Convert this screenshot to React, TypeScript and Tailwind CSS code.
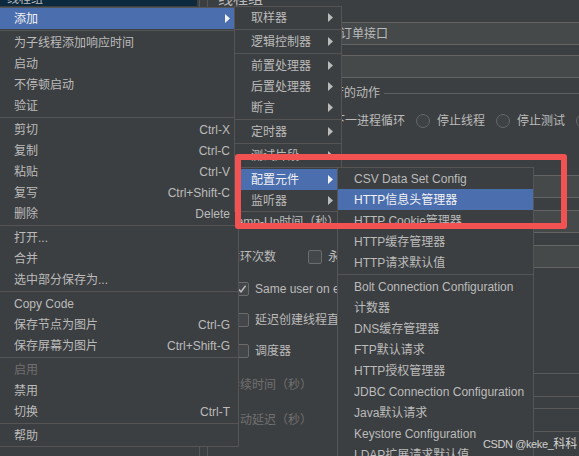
import React from "react";

type Item =
  | { type: "sep" }
  | {
      type: "item";
      label: string;
      shortcut?: string;
      arrow?: boolean;
      active?: boolean;
      disabled?: boolean;
    };

const Arrow = ({ color }: { color: string }) => (
  <svg width="5" height="9" viewBox="0 0 5 9" className="shrink-0">
    <path d="M0 0L5 4.5L0 9Z" fill={color} />
  </svg>
);

const Sep = () => (
  <div className="h-[3px] pt-[1px]">
    <div className="h-px bg-[#555555]" />
  </div>
);

function MenuList({ items, rowClass }: { items: Item[]; rowClass: string }) {
  return (
    <>
      {items.map((it, i) =>
        it.type === "sep" ? (
          <Sep key={i} />
        ) : (
          <div
            key={i}
            className={`flex h-[21px] items-center justify-between whitespace-nowrap ${rowClass} ${
              it.active ? "bg-[#4b6eaf] text-[#f2f2f2]" : it.disabled ? "text-[#707070]" : "text-[#bbbbbb]"
            }`}
          >
            <span className="leading-[14px]">{it.label}</span>
            {it.shortcut ? <span className="leading-[14px]">{it.shortcut}</span> : null}
            {it.arrow ? <Arrow color={it.active ? "#f2f2f2" : "#bbbbbb"} /> : null}
          </div>
        )
      )}
    </>
  );
}

const mainItems: Item[] = [
  { type: "item", label: "添加", arrow: true, active: true },
  { type: "sep" },
  { type: "item", label: "为子线程添加响应时间" },
  { type: "item", label: "启动" },
  { type: "item", label: "不停顿启动" },
  { type: "item", label: "验证" },
  { type: "sep" },
  { type: "item", label: "剪切", shortcut: "Ctrl-X" },
  { type: "item", label: "复制", shortcut: "Ctrl-C" },
  { type: "item", label: "粘贴", shortcut: "Ctrl-V" },
  { type: "item", label: "复写", shortcut: "Ctrl+Shift-C" },
  { type: "item", label: "删除", shortcut: "Delete" },
  { type: "sep" },
  { type: "item", label: "打开..." },
  { type: "item", label: "合并" },
  { type: "item", label: "选中部分保存为..." },
  { type: "sep" },
  { type: "item", label: "Copy Code" },
  { type: "item", label: "保存节点为图片", shortcut: "Ctrl-G" },
  { type: "item", label: "保存屏幕为图片", shortcut: "Ctrl+Shift-G" },
  { type: "sep" },
  { type: "item", label: "启用", disabled: true },
  { type: "item", label: "禁用" },
  { type: "item", label: "切换", shortcut: "Ctrl-T" },
  { type: "sep" },
  { type: "item", label: "帮助" },
];

const addItems: Item[] = [
  { type: "item", label: "取样器", arrow: true },
  { type: "sep" },
  { type: "item", label: "逻辑控制器", arrow: true },
  { type: "sep" },
  { type: "item", label: "前置处理器", arrow: true },
  { type: "item", label: "后置处理器", arrow: true },
  { type: "item", label: "断言", arrow: true },
  { type: "sep" },
  { type: "item", label: "定时器", arrow: true },
  { type: "sep" },
  { type: "item", label: "测试片段", arrow: true },
  { type: "sep" },
  { type: "item", label: "配置元件", arrow: true, active: true },
  { type: "item", label: "监听器", arrow: true },
];

const configItems: Item[] = [
  { type: "item", label: "CSV Data Set Config" },
  { type: "item", label: "HTTP信息头管理器", active: true },
  { type: "item", label: "HTTP Cookie管理器" },
  { type: "item", label: "HTTP缓存管理器" },
  { type: "item", label: "HTTP请求默认值" },
  { type: "sep" },
  { type: "item", label: "Bolt Connection Configuration" },
  { type: "item", label: "计数器" },
  { type: "item", label: "DNS缓存管理器" },
  { type: "item", label: "FTP默认请求" },
  { type: "item", label: "HTTP授权管理器" },
  { type: "item", label: "JDBC Connection Configuration" },
  { type: "item", label: "Java默认请求" },
  { type: "item", label: "Keystore Configuration" },
  { type: "item", label: "LDAP扩展请求默认值" },
  { type: "item", label: "LDAP请求默认值" },
];

const Radio = () => (
  <div className="h-[14px] w-[14px] shrink-0 rounded-full border border-[#666666] bg-[#3f4244]" />
);

const Checkbox = ({ checked }: { checked?: boolean }) => (
  <div className="flex h-[14px] w-[14px] shrink-0 items-center justify-center rounded-[2px] border border-[#6b6b6b] bg-[#43474a]">
    {checked ? (
      <svg width="10" height="10" viewBox="0 0 10 10">
        <path d="M1.5 5.2L4 7.8L8.6 1.8" stroke="#bbbbbb" strokeWidth="1.5" fill="none" />
      </svg>
    ) : null}
  </div>
);

export default function App() {
  return (
    <div className="relative flex h-[456px] w-[579px] overflow-hidden bg-[#3c3f41] font-[family-name:Liberation_Sans,Noto_Sans_CJK_SC,sans-serif] text-[12px] text-[#bbbbbb]">
      {/* tree column */}
      <div className="w-[200px] shrink-0 border-r border-[#555555]">
        <div className="-mt-[14px] mr-[2px] flex h-[20px] items-end bg-[#0d293e] pl-[7px]">
          <span className="leading-[14px] text-[#bbbbbb]">线程组</span>
        </div>
      </div>
      <div className="w-[7px] shrink-0" />
      {/* right panel */}
      <div className="flex w-[380px] shrink-0 flex-col border-l border-[#555555] pl-[10px]">
        <div className="-mt-[10px] h-[18px] text-[15px] leading-[18px]">线程组</div>
        <div className="mt-[14px] flex h-[23px] items-center">
          <span className="w-[32px] shrink-0 whitespace-nowrap">名称：</span>
          <div className="flex h-full flex-1 items-center border border-[#646464] bg-[#45494a] pl-[5px] whitespace-nowrap">
            测试场景一提交订单接口
          </div>
        </div>
        <div className="mt-[10px] flex h-[23px] items-center">
          <span className="w-[32px] shrink-0 whitespace-nowrap">注释：</span>
          <div className="h-full flex-1 border border-[#646464] bg-[#45494a]" />
        </div>
        <div className="mt-[7px] flex h-[16px] items-center gap-[4px]">
          <div className="h-px w-[2px] bg-[#5e6060]" />
          <span className="whitespace-nowrap">在取样器错误后要执行的动作</span>
          <div className="h-px flex-1 bg-[#5e6060]" />
        </div>
        <div className="mt-[10px] flex h-[20px] items-center pl-[14px] whitespace-nowrap">
          <Radio />
          <span className="ml-[7px]">继续</span>
          <div className="ml-[11px]"><Radio /></div>
          <span className="ml-[7px]">启动下一进程循环</span>
          <div className="ml-[11px]"><Radio /></div>
          <span className="ml-[7px]">停止线程</span>
          <div className="ml-[11px]"><Radio /></div>
          <span className="ml-[7px]">停止测试</span>
          <div className="ml-[11px]"><Radio /></div>
          <span className="ml-[7px]">立即停止测试</span>
        </div>
        <div className="flex flex-col pl-[10px]">
          <div className="mt-[44px] flex h-[23px] items-center">
            <span className="w-[120px] shrink-0 whitespace-nowrap">线程数：</span>
            <div className="h-full flex-1 border border-[#646464] bg-[#45494a]" />
          </div>
          <div className="mt-[12px] flex h-[23px] items-center">
            <span className="w-[120px] shrink-0 whitespace-nowrap">Ramp-Up时间（秒）</span>
            <div className="h-full flex-1 border border-[#646464] bg-[#45494a]" />
          </div>
          <div className="mt-[12px] flex h-[23px] items-center">
            <span className="w-[80px] shrink-0 whitespace-nowrap">循环次数</span>
            <Checkbox />
            <span className="ml-[6px] w-[32px] shrink-0">永远</span>
            <div className="h-full flex-1 border border-[#646464] bg-[#45494a]" />
          </div>
          <div className="mt-[11px] flex h-[20px] items-center pl-[7px] whitespace-nowrap">
            <Checkbox checked />
            <span className="ml-[6px]">Same user on each iteration</span>
          </div>
          <div className="mt-[11px] flex h-[20px] items-center pl-[7px] whitespace-nowrap">
            <Checkbox />
            <span className="ml-[6px]">延迟创建线程直到需要</span>
          </div>
          <div className="mt-[11px] flex h-[20px] items-center pl-[7px] whitespace-nowrap">
            <Checkbox />
            <span className="ml-[6px]">调度器</span>
          </div>
          <div className="mt-[12px] flex h-[24px] items-center text-[#707070]">
            <span className="w-[120px] shrink-0 whitespace-nowrap">持续时间（秒）</span>
            <div className="h-full flex-1 border border-[#5a5a5a]" />
          </div>
          <div className="mt-[11px] flex h-[24px] items-center text-[#707070]">
            <span className="w-[120px] shrink-0 whitespace-nowrap">启动延迟（秒）</span>
            <div className="h-full flex-1 border border-[#5a5a5a]" />
          </div>
        </div>
      </div>

      {/* context menu */}
      <div className="absolute left-[-1px] top-[7px] w-[240px] border border-[#555555] bg-[#3c3f41]">
        <MenuList items={mainItems} rowClass="pl-[14px] pr-[8px]" />
      </div>

      {/* add submenu */}
      <div className="absolute left-[234px] top-[6px] w-[108px] border border-[#555555] bg-[#3c3f41]">
        <MenuList items={addItems} rowClass="pl-[16px] pr-[8px]" />
      </div>

      {/* config submenu */}
      <div className="absolute left-[337px] top-[167px] w-[197px] border border-[#555555] bg-[#3c3f41]">
        <MenuList items={configItems} rowClass="pl-[16px] pr-[8px]" />
      </div>

      {/* annotation */}
      <div className="absolute left-[235px] top-[154px] h-[75px] w-[332px] rounded-[3px] border-[6px] border-[#f25252]" />

      {/* watermark */}
      <div className="absolute left-[483px] top-[436px] flex items-center whitespace-nowrap leading-[16px] text-[#cfcfcf]">
        <span className="text-[11px] tracking-[-0.4px]">CSDN @keke_</span>
        <span className="text-[12px]">科科</span>
      </div>
    </div>
  );
}
